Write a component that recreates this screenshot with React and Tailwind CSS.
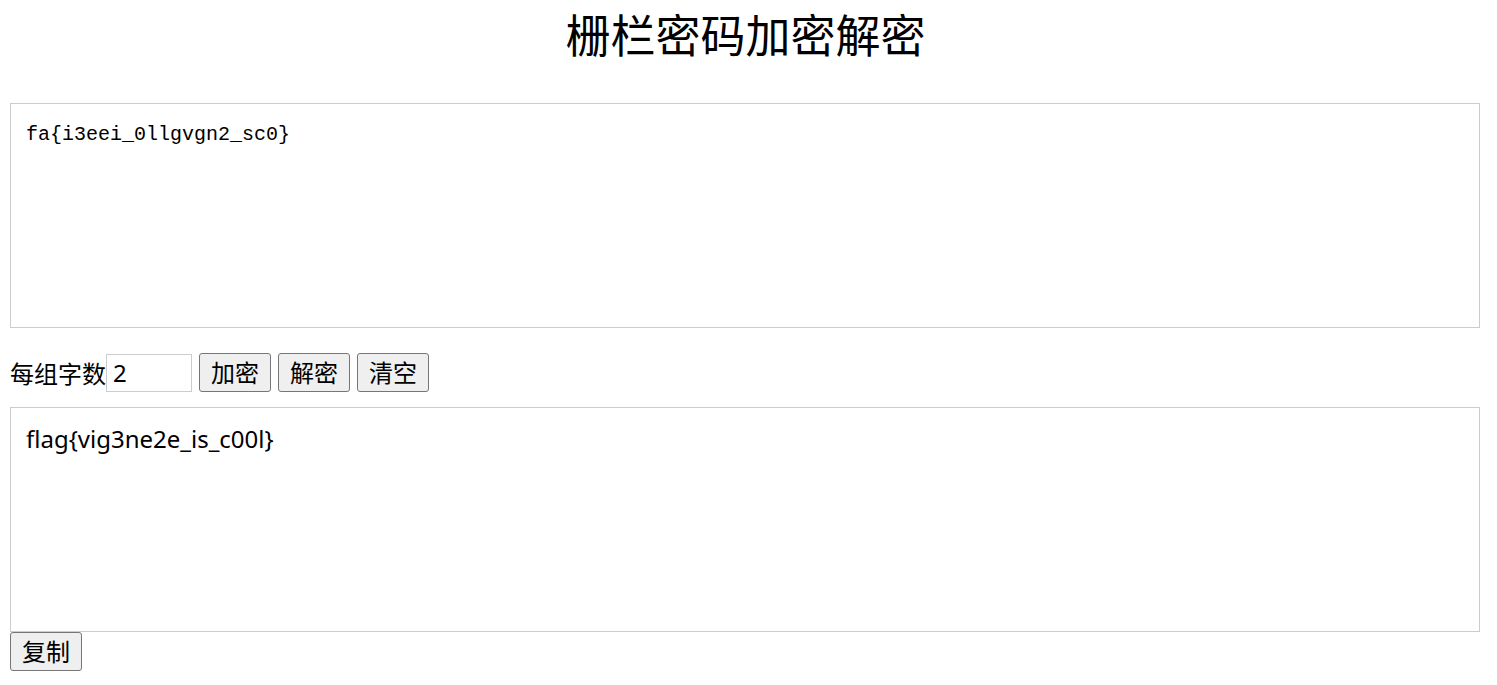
import React from 'react';

function Btn({ children }) {
  return (
    <button className="w-[72px] h-[39px] border border-[#767676] rounded-[3px] bg-[#efefef] text-[24px] leading-none text-black font-['Noto_Sans','Noto_Sans_CJK_SC',sans-serif]">
      {children}
    </button>
  );
}

export default function App() {
  return (
    <div className="w-[1497px] h-[685px] bg-white text-black overflow-hidden font-['Noto_Sans','Noto_Sans_CJK_SC',sans-serif]">
      <h1 className="pt-[7px] pr-[6px] text-center text-[45px] leading-[54px] font-normal font-['Noto_Sans_CJK_SC',sans-serif]">
        栅栏密码加密解密
      </h1>

      <textarea
        className="block mt-[42px] ml-[10px] w-[1470px] h-[225px] border border-[#cccccc] px-[15px] pt-[18px] text-[20px] leading-[26px] text-black resize-none outline-none font-['Liberation_Mono','Noto_Sans_CJK_SC',monospace]"
        defaultValue="fa{i3eei_0llgvgn2_sc0}"
      />

      <div className="flex items-center mt-[25px] ml-[10px] h-[39px]">
        <span className="text-[24px] leading-none font-['Noto_Sans_CJK_SC',sans-serif]">每组字数</span>
        <input
          className="w-[86px] h-[38px] border border-[#cccccc] px-[6px] text-[24px] outline-none"
          defaultValue="2"
        />
        <div className="flex gap-[7px] ml-[7px]">
          <Btn>加密</Btn>
          <Btn>解密</Btn>
          <Btn>清空</Btn>
        </div>
      </div>

      <textarea
        className="block mt-[15px] ml-[10px] w-[1470px] h-[225px] border border-[#cccccc] px-[15px] pt-[16px] text-[24px] leading-[30px] text-black resize-none outline-none"
        defaultValue="flag{vig3ne2e_is_c00l}"
      />

      <div className="ml-[10px]">
        <Btn>复制</Btn>
      </div>
    </div>
  );
}
